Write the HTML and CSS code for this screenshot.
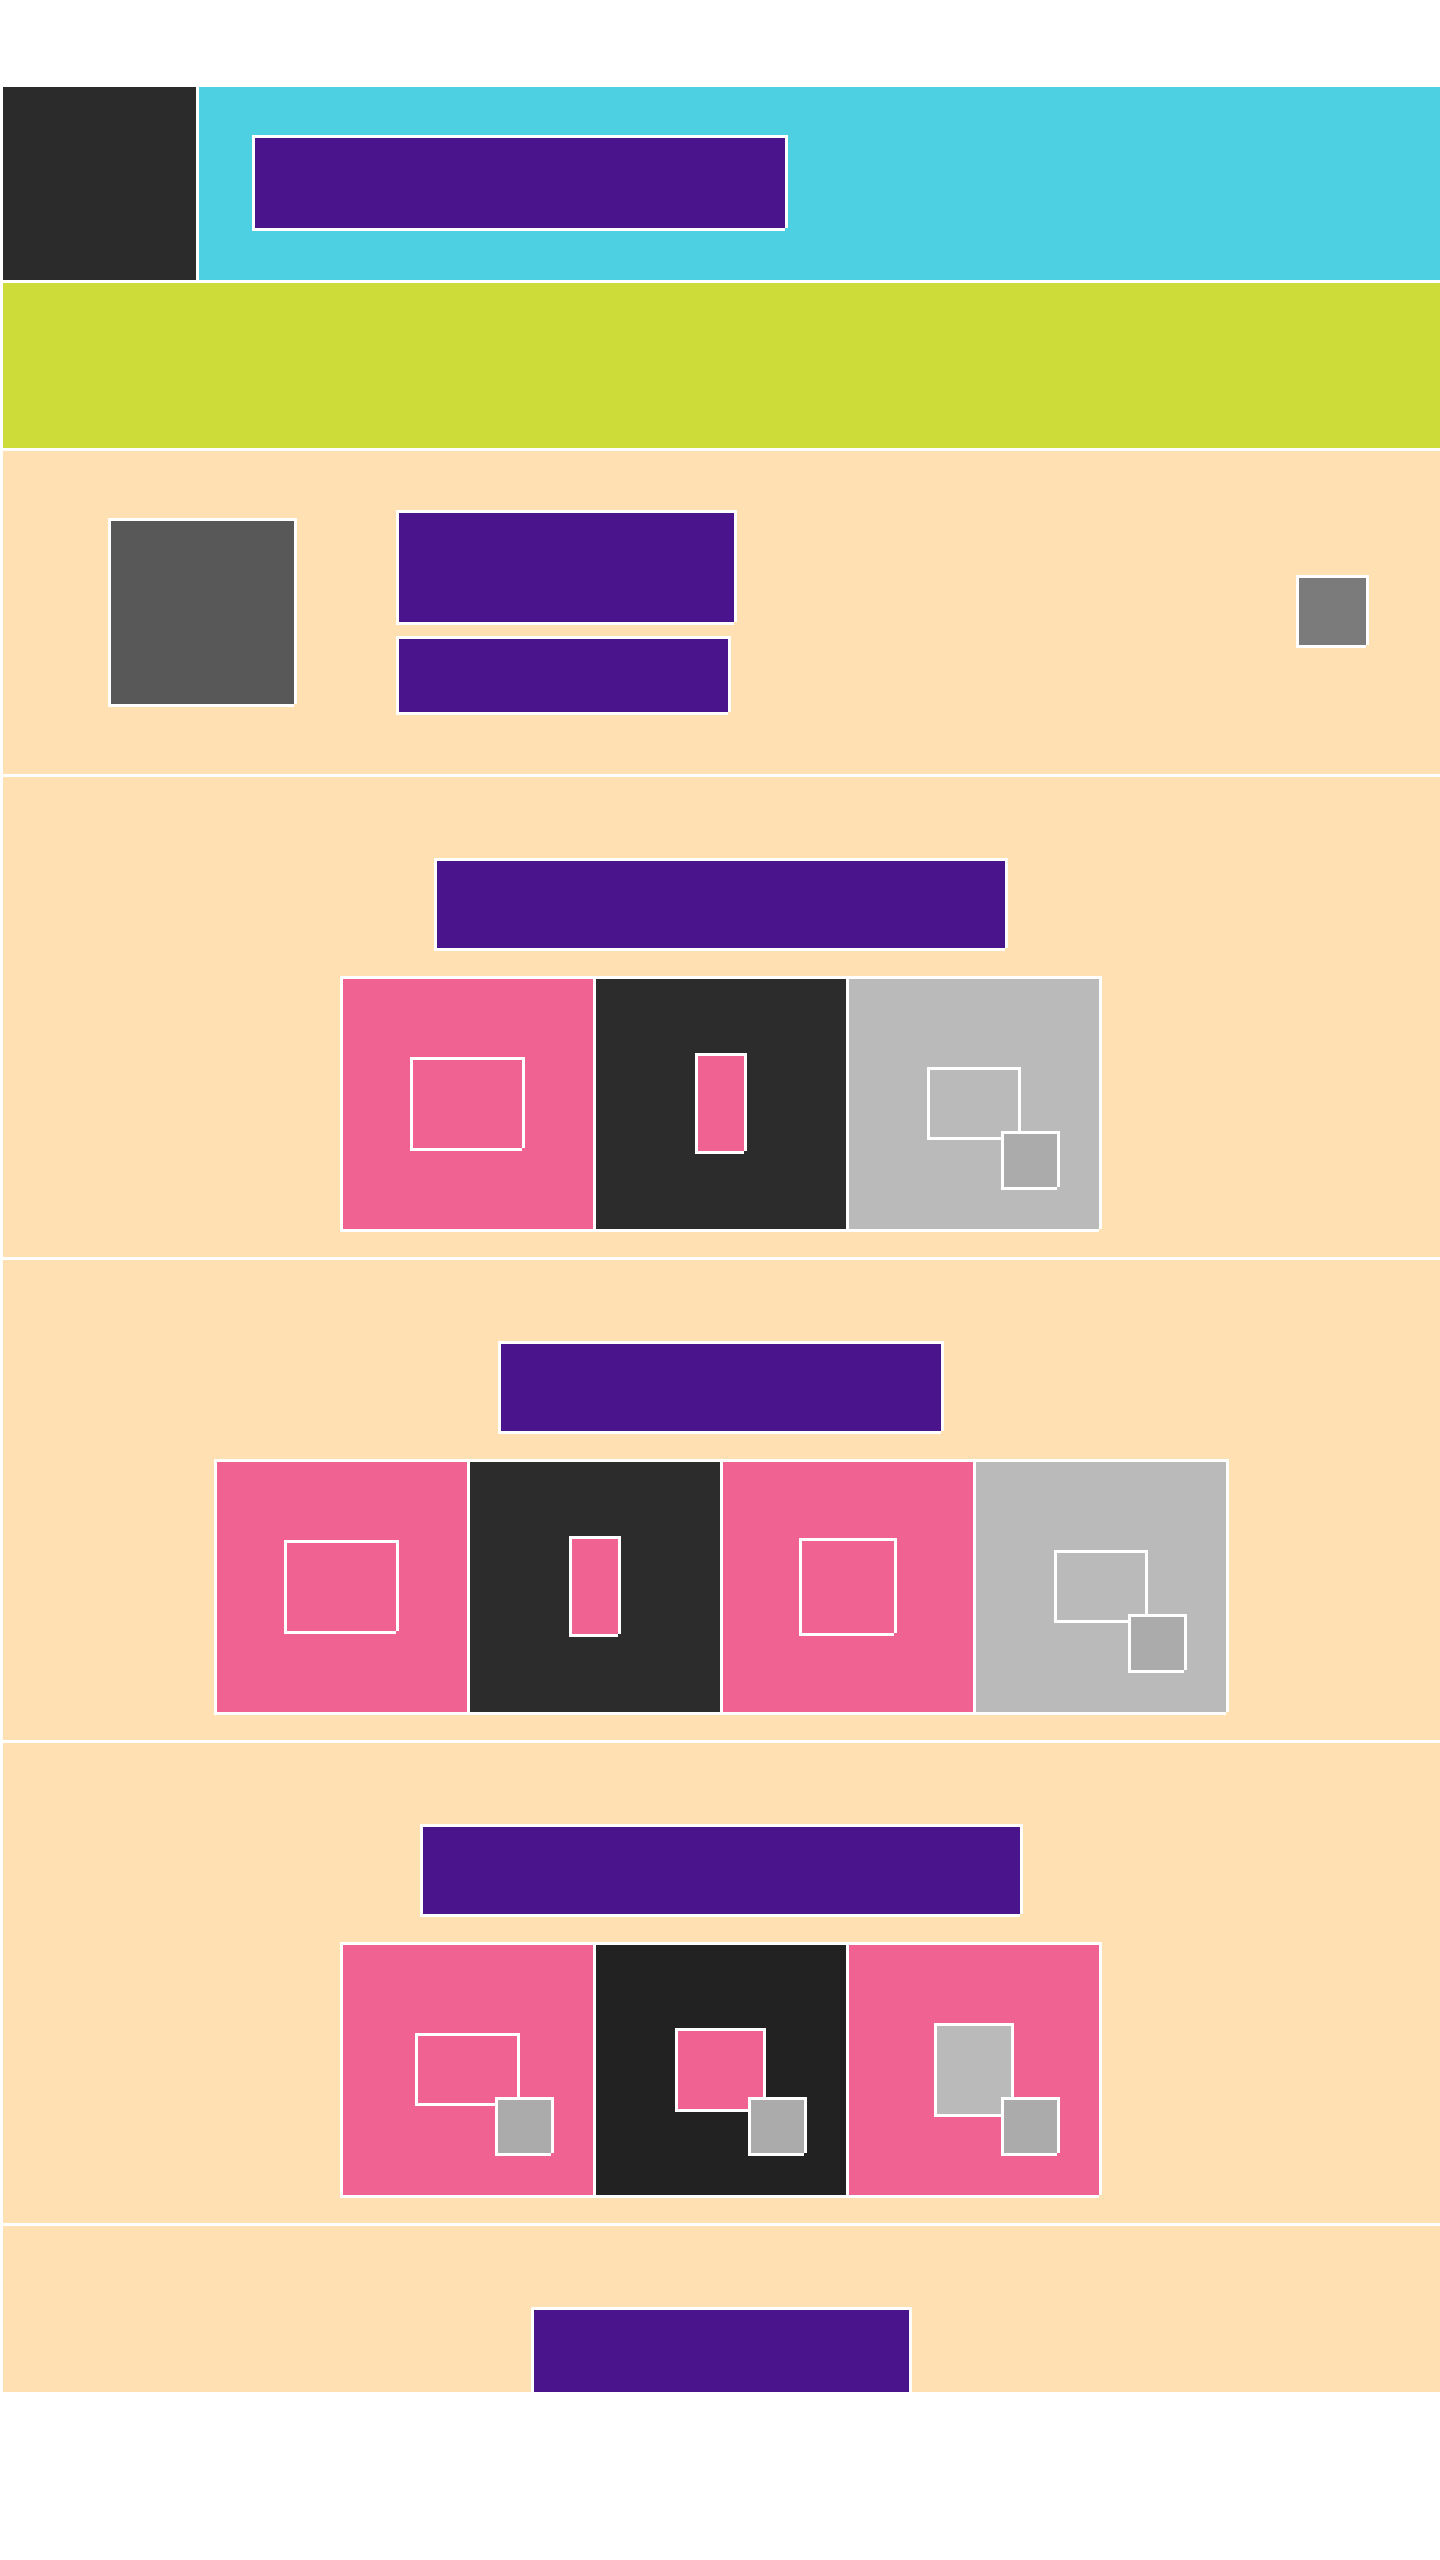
FILE: index.html
```html
<!DOCTYPE html>
<html lang="en">
<head>
  <meta charset="utf-8">
  <meta name="viewport" content="width=device-width, initial-scale=1">
  <title>Wireframe</title>
  <link rel="stylesheet" href="styles.css">
</head>
<body>
  <main class="screen">
    <header class="toolbar">
      <div class="toolbar-icon"></div>
      <div class="toolbar-body">
        <div class="block text toolbar-title"></div>
      </div>
    </header>
    <div class="banner"></div>

    <section class="profile">
      <div class="block avatar"></div>
      <div class="profile-lines">
        <div class="block text line-name"></div>
        <div class="block text line-detail"></div>
      </div>
      <div class="block action"></div>
    </section>

    <section class="group">
      <div class="block text heading heading-a"></div>
      <div class="tiles">
        <div class="block tile pink"><div class="block pink glyph-wide odd-width"></div></div>
        <div class="block tile dark"><div class="block pink glyph-slim odd-height"></div></div>
        <div class="block tile silver"><div class="block silver glyph-small odd-height"></div><div class="block badge"></div></div>
      </div>
    </section>

    <section class="group">
      <div class="block text heading heading-b"></div>
      <div class="tiles odd-row">
        <div class="block tile pink"><div class="block pink glyph-wide odd-width"></div></div>
        <div class="block tile dark"><div class="block pink glyph-slim odd-height"></div></div>
        <div class="block tile pink"><div class="block pink glyph-square"></div></div>
        <div class="block tile silver"><div class="block silver glyph-small odd-height"></div><div class="block badge"></div></div>
      </div>
    </section>

    <section class="group">
      <div class="block text heading heading-c odd-row"></div>
      <div class="tiles">
        <div class="block tile pink"><div class="block pink glyph-flat odd-width odd-height"></div><div class="block badge"></div></div>
        <div class="block tile black"><div class="block pink glyph-medium odd-width"></div><div class="block badge"></div></div>
        <div class="block tile pink"><div class="block silver glyph-tall"></div><div class="block badge"></div></div>
      </div>
    </section>

    <section class="group">
      <div class="block text heading heading-d odd-row"></div>
    </section>
  </main>
</body>
</html>
```

FILE: styles.css
```css
:root {
  --line: 3px;
}

* {
  box-sizing: border-box;
}

/* Space for the system bars above and below the screen */
body {
  margin: 0;
  height: 100vh;
  padding: 84px 0 168px;
  background: #ffffff;
  font-family: Roboto, sans-serif;
}

.screen {
  height: 100%;
  overflow: hidden;
  border-left: var(--line) solid #ffffff;
}

/* Outlined block with its bottom-right corner cut out */
.block {
  flex: none;
  border: var(--line) solid #ffffff;
  clip-path: polygon(
    0 0,
    100% 0,
    100% calc(100% - var(--line)),
    calc(100% - var(--line)) calc(100% - var(--line)),
    calc(100% - var(--line)) 100%,
    0 100%
  );
}

.text { background: #4a148c; }
.pink { background: #f06292; }
.dark { background: #2c2c2c; }
.black { background: #222222; }
.silver { background: #bababa; }

.toolbar {
  display: flex;
  gap: var(--line);
  border-top: var(--line) solid #ffffff;
}

.toolbar-icon {
  width: 193px;
  height: 193px;
  background: #2b2b2b;
}

.toolbar-body {
  flex: 1;
  display: flex;
  align-items: center;
  padding: 0 0 1px 53px;
  background: #4dd0e1;
}

.toolbar-title {
  width: 536px;
  height: 96px;
}

.banner {
  height: 168px;
  border-top: var(--line) solid #ffffff;
  background: #cddc39;
}

.profile {
  display: flex;
  align-items: center;
  gap: 99px;
  height: 326px;
  padding: 0 71px 0 105px;
  border-top: var(--line) solid #ffffff;
  background: #ffe0b2;
}

.avatar {
  width: 189px;
  height: 189px;
  background: #585858;
}

.profile-lines {
  display: flex;
  flex-direction: column;
  gap: 11px;
}

.line-name {
  width: 341px;
  height: 115px;
}

.line-detail {
  width: 335px;
  height: 79px;
}

.action {
  width: 73px;
  height: 73px;
  margin: 0 0 2px auto;
  background: #7b7b7b;
}

.group {
  display: flex;
  flex-direction: column;
  align-items: center;
  gap: 25px;
  padding: 81px 1px 25px 0;
  border-top: var(--line) solid #ffffff;
  background: #ffe0b2;
}

.heading { height: 93px; }
.heading-a { width: 574px; }
.heading-b { width: 446px; }
.heading-c { width: 603px; }
.heading-d { width: 381px; }

.tiles {
  display: flex;
}

.tile {
  position: relative;
  display: grid;
  place-items: center;
  width: 256px;
  height: 256px;
}

/* Neighbouring tiles share one line */
.tile + .tile {
  margin-left: calc(-1 * var(--line));
}

/* Keep centred blocks of odd size on whole pixels, so outlines stay crisp */
.odd-row { margin-left: 1px; }
.odd-width { margin-right: 1px; }
.odd-height { margin-bottom: 1px; }

.glyph-wide { width: 115px; height: 94px; }
.glyph-slim { width: 52px; height: 101px; }
.glyph-square { width: 98px; height: 98px; }
.glyph-small { width: 94px; height: 73px; }
.glyph-flat { width: 105px; height: 73px; }
.glyph-medium { width: 91px; height: 84px; }
.glyph-tall { width: 80px; height: 94px; }

.badge {
  position: absolute;
  right: 39px;
  bottom: 39px;
  width: 59px;
  height: 59px;
  background: #ababab;
}
```
